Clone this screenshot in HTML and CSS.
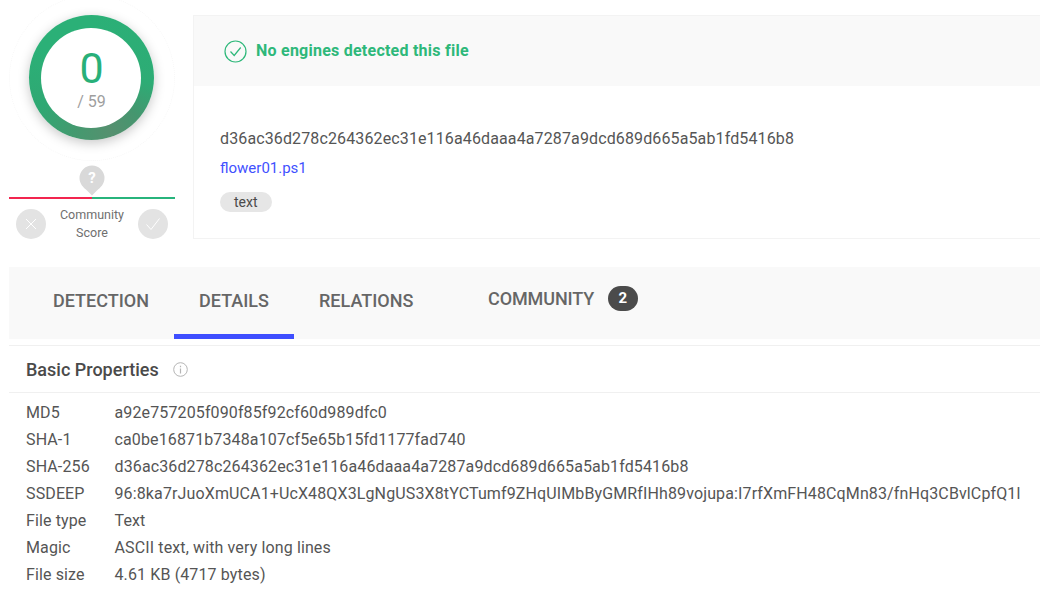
FILE: index.html
```html
<!DOCTYPE html>
<html lang="en">
<head>
<meta charset="utf-8">
<title>File report</title>
<link rel="stylesheet" href="styles.css">
</head>
<body>
<section class="summary">
  <div class="score">
    <div class="gauge">
      <div class="ring">
        <div class="ring-inner">
          <div class="positives">0</div>
          <div class="total">/ 59</div>
        </div>
      </div>
    </div>
    <div class="community">
      <svg class="pin" width="26" height="34" viewBox="0 0 26 34"><path d="M13 0.5a12.5 12.5 0 0 1 12.5 12.5c0 6-4 9.500-7.500 12.500L13 30.500 8 25.500C4.500 22.500 .5 19 .5 13A12.500 12.500 0 0 1 13 .5z" fill="#d9d9d9"/></svg>
      <span class="pin-mark">?</span>
      <div class="meter"></div>
      <div class="votes">
        <span class="vote">
          <svg width="16" height="16" viewBox="0 0 16 16"><path d="M3 3l10 10M13 3l-10 10" stroke="#fff" stroke-width="1" fill="none"/></svg>
        </span>
        <span class="community-label">Community<br>Score</span>
        <span class="vote">
          <svg width="16" height="16" viewBox="0 0 16 16"><path d="M1.500 8.500l4.500 5 8.500-11" stroke="#fff" stroke-width="1" fill="none"/></svg>
        </span>
      </div>
    </div>
  </div>
  <div class="card">
    <div class="verdict">
      <svg width="23" height="23" viewBox="0 0 23 23"><circle cx="11.500" cy="11.500" r="10.500" fill="none" stroke="#2eb87a" stroke-width="1.200"/><path d="M6.500 11.500l3.700 4 6.500-8" fill="none" stroke="#2eb87a" stroke-width="1.200"/></svg>
      <span class="verdict-text">No engines detected this file</span>
    </div>
    <div class="file-info">
      <div class="hash">d36ac36d278c264362ec31e116a46daaa4a7287a9dcd689d665a5ab1fd5416b8</div>
      <a class="file-name" href="#">flower01.ps1</a>
      <span class="tag">text</span>
    </div>
  </div>
</section>

<nav class="tabs">
  <a class="tab tab-detection" href="#">DETECTION</a>
  <a class="tab tab-details" href="#">DETAILS</a>
  <a class="tab tab-relations" href="#">RELATIONS</a>
  <a class="tab tab-community" href="#">COMMUNITY <span class="badge">2</span></a>
</nav>

<section class="props">
  <h2 class="props-title">Basic Properties
    <svg width="15" height="15" viewBox="0 0 15 15"><circle cx="7.500" cy="7.500" r="6.800" fill="none" stroke="#b5b5b5" stroke-width="1"/><path d="M7.500 6.500v5M7.500 3.800v1.400" stroke="#b5b5b5" stroke-width="1.200"/></svg>
  </h2>
  <dl class="prop-list">
    <dt>MD5</dt><dd>a92e757205f090f85f92cf60d989dfc0</dd>
    <dt>SHA-1</dt><dd>ca0be16871b7348a107cf5e65b15fd1177fad740</dd>
    <dt>SHA-256</dt><dd>d36ac36d278c264362ec31e116a46daaa4a7287a9dcd689d665a5ab1fd5416b8</dd>
    <dt>SSDEEP</dt><dd>96:8ka7rJuoXmUCA1+UcX48QX3LgNgUS3X8tYCTumf9ZHqUIMbByGMRfIHh89vojupa:I7rfXmFH48CqMn83/fnHq3CBvlCpfQ1l</dd>
    <dt>File type</dt><dd>Text</dd>
    <dt>Magic</dt><dd>ASCII text, with very long lines</dd>
    <dt>File size</dt><dd>4.61 KB (4717 bytes)</dd>
  </dl>
</section>
</body>
</html>
```
FILE: styles.css
```css
* { box-sizing: border-box; }
html, body { margin: 0; padding: 0; }
body {
  width: 1040px;
  height: 599px;
  overflow: hidden;
  background: #fff;
  color: #4a4a4a;
  font-family: Roboto, "Liberation Sans", sans-serif;
  font-size: 14px;
  padding-top: 15px;
}
a { text-decoration: none; }

.summary { display: flex; height: 224px; padding-left: 9px; }
.score { width: 166px; flex: none; }
.gauge { position: relative; display: flex; justify-content: center; height: 150px; margin-left: -2px; }
.gauge::before {
  content: ""; position: absolute; left: 2px; top: -20px;
  width: 164px; height: 164px; border-radius: 50%;
  border: 1px dotted #f7f7f7;
}
.ring {
  position: relative;
  width: 125px; height: 125px; border-radius: 50%;
  background: conic-gradient(from 0deg, #2bb077 0deg, #2dac75 95deg, #45966f 130deg, #55906f 160deg, #45996f 195deg, #2fa873 240deg, #2bb077 300deg);
  box-shadow: 0 3px 12px rgba(0,0,0,.22);
  display: flex; align-items: center; justify-content: center;
}
.ring-inner {
  width: 100px; height: 100px; border-radius: 50%;
  background: #fff;
  display: flex; flex-direction: column; align-items: center;
  padding: 18px 0 0 1px;
}
.positives { font-size: 43px; line-height: 44px; color: #28b079; }
.total { font-size: 16px; line-height: 20px; color: #9e9e9e; margin-top: 2px; }

.community { position: relative; height: 74px; }
.pin { position: absolute; left: 70px; top: 0; }
.pin-mark { position: absolute; left: 70px; top: 3px; width: 26px; text-align: center; color: #fff; font-size: 15px; line-height: 20px; font-weight: 700; }
.meter {
  position: absolute; left: 0; right: 0; top: 32px; height: 2px;
  background: linear-gradient(to right, #f2254f 50%, #27b47c 50%);
}
.votes { position: absolute; left: 7px; width: 152px; top: 41px; display: flex; justify-content: space-between; align-items: center; }
.vote { width: 30px; height: 30px; border-radius: 50%; background: #e3e3e3; display: flex; align-items: center; justify-content: center; margin-top: -1px; }
.community-label { font-size: 12.500px; line-height: 18px; text-align: center; color: #6f6f6f; }

.card { flex: 1; border: 1px solid #f3f3f3; border-right: 0; margin-left: 18px; }
.verdict {
  height: 70px; background: #f9f9f9; padding-left: 30px;
  display: flex; align-items: center; gap: 9px;
  color: #2eb87a; font-size: 16px; letter-spacing: .24px; font-weight: 700;
}
.verdict-text { margin-top: -2px; }
.file-info { padding: 44px 0 0 26px; display: flex; flex-direction: column; align-items: flex-start; }
.hash { font-size: 16px; line-height: 18px; letter-spacing: .125px; color: #555; }
.file-name { font-size: 15px; line-height: 18px; margin-top: 11px; color: #3f51ff; }
.tag { margin-top: 15px; height: 20px; line-height: 20px; padding: 0 14.500px 0 14px; border-radius: 10px; background: #e6e6e6; font-size: 14px; color: #4a4a4a; }

.tabs {
  position: relative;
  margin: 28px 0 0 9px; height: 72px; background: #f9f9f9;
  display: flex; align-items: flex-start;
}
.tab { color: #666; font-size: 18px; font-weight: 500; line-height: 22px; height: 72px; padding-top: 23px; }
.tab-detection { padding-left: 44px; width: 165px; }
.tab-details { width: 120px; text-align: center; border-bottom: 5px solid #3f4fff; }
.tab-relations { padding-left: 25px; width: 194px; }
.tab-community { padding-top: 21px; display: flex; align-items: flex-start; gap: 13.500px; letter-spacing: -.1px; }
.badge {
  width: 30px; height: 25px; margin-top: -2px; border-radius: 12.500px; background: #4b4b4b;
  color: #fff; font-size: 15px; font-weight: 700; line-height: 25px; text-align: center; letter-spacing: 0;
}

.props { margin: 6px 0 0 9px; }
.props-title {
  margin: 0; height: 48px; padding-left: 17px;
  border-top: 1px solid #f0f0f0; border-bottom: 1px solid #f0f0f0;
  display: flex; align-items: center; gap: 14.500px;
  font-size: 18px; font-weight: 500; color: #4a4a4a;
}
.prop-list {
  margin: 6px 0 0; padding-left: 17px;
  display: grid; grid-template-columns: 88.500px 1fr; grid-auto-rows: 27px;
  align-items: center; font-size: 16px; letter-spacing: .125px; white-space: nowrap;
}
.prop-list dt { color: #555; }
.prop-list dd { margin: 0; color: #555; }
```
